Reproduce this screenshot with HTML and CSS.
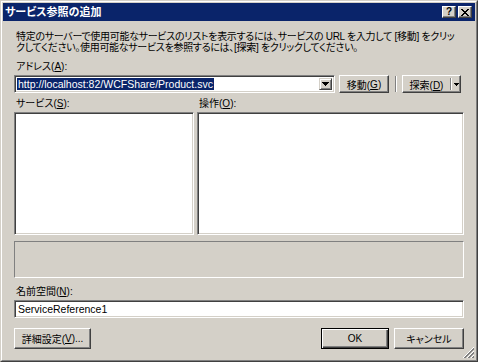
FILE: index.html
```html
<!DOCTYPE html>
<html lang="ja">
<head>
    <meta charset="UTF-8">
    <title>サービス参照の追加</title>
    <link rel="stylesheet" href="styles.css">
</head>
<body>
    <div class="window">
        <div class="frame">
            <div class="titlebar">
                <span class="title">サービス参照の追加</span>
                <span class="cap-btn help">?</span>
                <span class="cap-btn close">
                    <svg width="8" height="7" viewBox="0 0 8 7" shape-rendering="crispEdges">
                        <path d="M0 0h2v1h1v1h2v-1h1v-1h2v1h-1v1h-1v1h-1v1h1v1h1v1h1v1h-2v-1h-1v-1h-2v1h-1v1h-2v-1h1v-1h1v-1h1v-1h-1v-1h-1v-1h-1z" fill="#000"/>
                    </svg>
                </span>
            </div>

            <div class="content">
                <p class="desc">特定のサーバーで使用可能なサービスのリストを表示するには、サービスの URL を入力して [移動] をクリッ<br>クしてください。使用可能なサービスを参照するには、[探索] をクリックしてください。</p>

                <div class="label addr-label">アドレス(<u>A</u>):</div>
                <div class="address-row">
                    <div class="field combo">
                        <span class="selected">http://localhost:82/WCFShare/Product.svc</span>
                        <span class="drop-btn">
                            <svg width="7" height="4" viewBox="0 0 7 4" shape-rendering="crispEdges"><path d="M0 0h7v1H0zM1 1h5v1H1zM2 2h3v1H2zM3 3h1v1H3z" fill="#000"/></svg>
                        </span>
                    </div>
                    <span class="btn go-btn">移動(<u>G</u>)</span>
                    <span class="sep"></span>
                    <span class="btn split-btn">
                        <span class="split-label">探索(<u>D</u>)</span>
                        <span class="split-div"></span>
                        <span class="split-arrow">
                            <svg width="5" height="3" viewBox="0 0 5 3" shape-rendering="crispEdges"><path d="M0 0h5v1H0zM1 1h3v1H1zM2 2h1v1H2z" fill="#000"/></svg>
                        </span>
                    </span>
                </div>

                <div class="lists">
                    <div class="label">サービス(<u>S</u>):</div>
                    <div class="label">操作(<u>O</u>):</div>
                    <div class="field listbox"></div>
                    <div class="field listbox"></div>
                </div>

                <div class="status"></div>

                <div class="label ns-label">名前空間(<u>N</u>):</div>
                <div class="field textbox">ServiceReference1</div>

                <div class="button-row">
                    <span class="btn adv-btn">詳細設定(<u>V</u>)...</span>
                    <span class="btn ok-btn">OK</span>
                    <span class="btn cancel-btn">キャンセル</span>
                </div>
            </div>

            <svg class="grip" width="12" height="12" viewBox="0 0 12 12" shape-rendering="crispEdges">
                <path d="M11 0L0 11M11 4L4 11M11 8L8 11" stroke="#fff" stroke-width="1"/>
                <path d="M11 1L1 11M11 2L2 11M11 5L5 11M11 6L6 11M11 9L9 11M11 10L10 11" stroke="#808080" stroke-width="1"/>
            </svg>
        </div>
    </div>
</body>
</html>
```

FILE: styles.css
```css
body {
    margin: 0;
    background: #d4d0c8;
    font-family: "Liberation Sans", "Noto Sans CJK JP", sans-serif;
    font-size: 10px;
    font-feature-settings: "palt";
    color: #000;
}
.window {
    width: 478px;
    height: 362px;
    box-sizing: border-box;
    border: 1px solid;
    border-color: #d4d0c8 #404040 #404040 #d4d0c8;
}
.frame {
    position: relative;
    height: 100%;
    box-sizing: border-box;
    border: 1px solid;
    border-color: #fff #808080 #808080 #fff;
    padding: 1px;
    display: flex;
    flex-direction: column;
    background: #d4d0c8;
}
.titlebar {
    height: 18px;
    flex: none;
    background: #0a246a;
    display: flex;
    align-items: center;
    padding: 0 3px 0 2px;
}
.title {
    flex: 1;
    color: #fff;
    font-weight: bold;
    font-size: 11px;
    line-height: 12px;
}
.cap-btn {
    width: 14px;
    height: 12px;
    box-sizing: border-box;
    background: #d4d0c8;
    border: 1px solid;
    border-color: #fff #404040 #404040 #fff;
    box-shadow: inset -1px -1px #808080;
    display: flex;
    align-items: center;
    justify-content: center;
    font-weight: bold;
    font-size: 10px;
    line-height: 10px;
}
.cap-btn + .cap-btn {
    margin-left: 2px;
}
.content {
    flex: 1;
    padding: 0 11px;
}
.desc {
    margin: 10px 2px 0;
    line-height: 11px;
    letter-spacing: -0.3px;
    white-space: nowrap;
}
.label {
    line-height: 10px;
    padding-left: 2px;
    white-space: nowrap;
}
.addr-label {
    margin-top: 9px;
}
.field {
    box-sizing: border-box;
    background: #fff;
    border: 1px solid;
    border-color: #808080 #fff #fff #808080;
    box-shadow: inset 1px 1px #404040, inset -1px -1px #d4d0c8;
}
.address-row {
    margin-top: 3px;
    height: 18px;
    display: flex;
}
.combo {
    width: 321px;
    height: 18px;
    display: flex;
    align-items: center;
    padding: 0 2px 0 2px;
}
.selected {
    background: #0a246a;
    color: #fff;
    font-size: 10.5px;
    line-height: 12px;
    padding: 0 1px;
}
.drop-btn {
    margin-left: auto;
    width: 13px;
    height: 12px;
    box-sizing: border-box;
    background: #d4d0c8;
    border: 1px solid;
    border-color: #d4d0c8 #404040 #404040 #d4d0c8;
    box-shadow: inset 1px 1px #fff, inset -1px -1px #808080;
    display: flex;
    align-items: center;
    justify-content: center;
}
.btn {
    box-sizing: border-box;
    height: 18px;
    background: #d4d0c8;
    border: 1px solid;
    border-color: #fff #404040 #404040 #fff;
    box-shadow: inset -1px -1px #808080;
    display: flex;
    align-items: center;
    justify-content: center;
    white-space: nowrap;
}
.go-btn {
    width: 50px;
    margin-left: 4px;
}
.sep {
    width: 0;
    height: 16px;
    margin: 1px 5px 0 6px;
    border-left: 1px solid #808080;
    border-right: 1px solid #fff;
}
.split-btn {
    width: 59px;
    justify-content: flex-start;
}
.split-label {
    flex: 1;
    text-align: center;
}
.split-div {
    width: 0;
    height: 12px;
    border-left: 1px solid #808080;
    border-right: 1px solid #fff;
}
.split-arrow {
    width: 8px;
    display: flex;
    justify-content: center;
}
.lists {
    margin-top: 6px;
    display: grid;
    grid-template-columns: 180px 1fr;
    grid-template-rows: 10px 123px;
    column-gap: 3px;
    row-gap: 3px;
}
.status {
    margin-top: 6px;
    height: 37px;
    box-sizing: border-box;
    border: 1px solid;
    border-color: #808080 #fff #fff #808080;
}
.ns-label {
    margin-top: 9px;
}
.textbox {
    margin-top: 3px;
    height: 18px;
    padding-left: 3px;
    font-size: 10.5px;
    line-height: 16px;
}
.button-row {
    margin-top: 10px;
    display: flex;
}
.button-row .btn {
    height: 21px;
}
.adv-btn {
    width: 77px;
}
.ok-btn {
    width: 68px;
    margin-left: auto;
    border-color: #000;
    box-shadow: inset 1px 1px #fff, inset -1px -1px #404040, inset -2px -2px #808080;
}
.cancel-btn {
    width: 70px;
    margin-left: 5px;
}
.grip {
    position: absolute;
    right: 1px;
    bottom: 1px;
}
```
